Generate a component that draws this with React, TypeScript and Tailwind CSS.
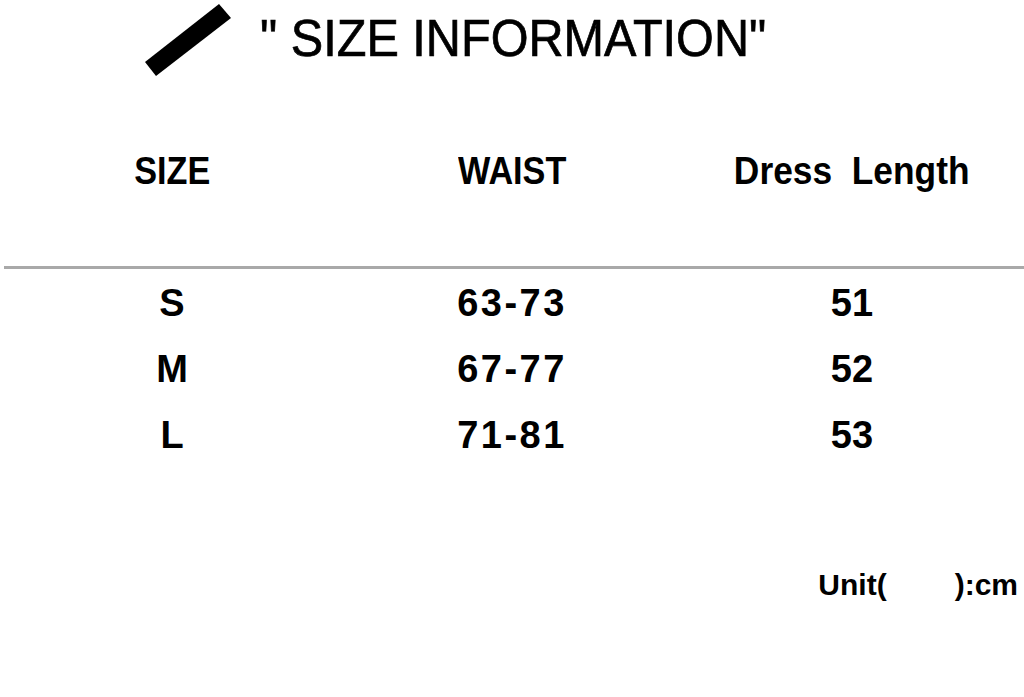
export default function App() {
  const rows = [
    { size: "S", waist: "63-73", length: "51" },
    { size: "M", waist: "67-77", length: "52" },
    { size: "L", waist: "71-81", length: "53" },
  ];

  return (
    <div className="w-[1024px] h-[697px] bg-white text-black overflow-hidden font-['Liberation_Sans',Arial,sans-serif]">
      {/* title */}
      <div className="h-[76px] flex items-center">
        <svg className="ml-[143px] shrink-0" width="90" height="76" viewBox="0 0 90 76">
          <polygon points="2,62 76,4 88,18 13,76" fill="#000" />
        </svg>
        <span className="ml-[27px] inline-block origin-left scale-x-[0.935] text-[52px] leading-none whitespace-pre [-webkit-text-stroke:0.7px_#000]">
          " SIZE INFORMATION"
        </span>
      </div>

      {/* headers */}
      <div className="mt-[65px] h-[60px] ml-[2px] w-[1020px] grid grid-cols-3 items-center text-center text-[38px] font-bold leading-none">
        <div><span className="inline-block scale-x-[0.9]">SIZE</span></div>
        <div><span className="inline-block scale-x-[0.9]">WAIST</span></div>
        <div><span className="inline-block scale-x-[0.93] whitespace-pre">Dress  Length</span></div>
      </div>

      <div className="mt-[65px] ml-[4px] w-[1020px] h-[3px] bg-[#a9a9a9]" />

      {/* rows */}
      <div className="mt-[1px] ml-[2px] w-[1020px]">
        {rows.map((r) => (
          <div key={r.size} className="h-[66px] grid grid-cols-3 items-center text-center text-[38px] font-bold leading-none">
            <div>{r.size}</div>
            <div className="tracking-[2.5px]">{r.waist}</div>
            <div>{r.length}</div>
          </div>
        ))}
      </div>

      <div className="mt-[102px] h-[30px] flex items-center justify-end pr-[6px] text-[30px] font-bold leading-none">
        <span>Unit(</span>
        <span className="w-[68px]" />
        <span>):cm</span>
      </div>
    </div>
  );
}
